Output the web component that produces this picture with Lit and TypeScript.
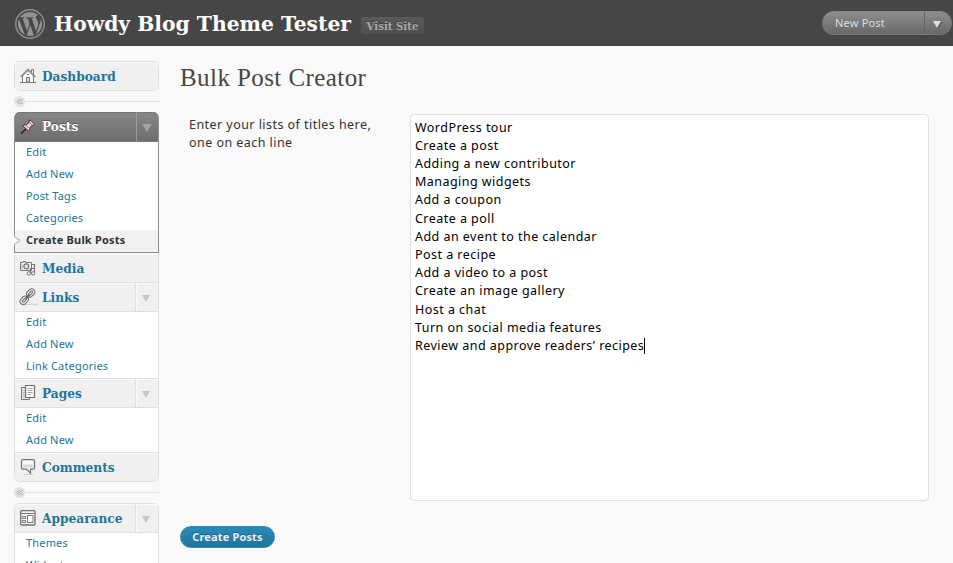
import { LitElement, html, svg, css, nothing } from "lit";
import { customElement, property } from "lit/decorators.js";
import { classMap } from "lit/directives/class-map.js";

const icons: Record<string, unknown> = {
  dashboard: svg`<path d="M8 2.500 2.500 8v6.500h11V8z" fill="#fafafa" stroke="#777"/><path d="M.5 8.800 8 1.300l7.500 7.500" fill="none" stroke="#808080" stroke-width="1.200"/><path d="M11.500 4V1.500h2V6" fill="#eee" stroke="#777"/><path d="M6.500 14v-4.500h3V14z" fill="#ddd" stroke="#777"/><path d="M7 6.500h2M0 14.500h16" fill="none" stroke="#777"/>`,
  posts: svg`<path d="M0 14.500h12" stroke="#875d5d" opacity=".6"/><path d="M7 9 1 14.500" stroke="#2b2020" stroke-width="1.600"/><path d="M10 .8 14.800 5.300 13.400 6.200 12.400 6 9.800 8.900 9.600 11.500 8.400 12 3.200 7.200 4 6 6.600 5.800 9.400 3.200 9 2z" fill="#efd2d0" stroke="#332626" stroke-width=".9"/><path d="m6.200 6.600 3.400 3M9.500 3.500l2.500 2.400" stroke="#a87c7a"/>`,
  media: svg`<path d="M.5 2.500h2.500v-1h2.500v1h6v8H.500z" fill="#f5f5f5" stroke="#777"/><circle cx="6.300" cy="6.300" r="2.500" fill="#e4e4e4" stroke="#777" stroke-width="1.200"/><path d="M2 4v5" stroke="#aaa"/><path d="M12 4.500h2.500v9M10.500 13.500V8.500h4" fill="none" stroke="#777" stroke-width="1.200"/><circle cx="8.800" cy="13.400" r="1.700" fill="#eee" stroke="#777"/><circle cx="13" cy="13.400" r="1.700" fill="#eee" stroke="#777"/>`,
  links: svg`<path d="M4 15.300h14" stroke="#ccc"/><g fill="none" stroke="#6c6c6c" stroke-width="3.200"><rect x="7.300" y="1.900" width="6.800" height="4.200" rx="2.100" transform="rotate(-45 10.700 4)"/><rect x=".8" y="9.300" width="6.800" height="4.200" rx="2.100" transform="rotate(-45 4.200 11.400)"/></g><g fill="none" stroke="#e4e4e4" stroke-width="1.300"><rect x="7.300" y="1.900" width="6.800" height="4.200" rx="2.100" transform="rotate(-45 10.700 4)"/><rect x=".8" y="9.300" width="6.800" height="4.200" rx="2.100" transform="rotate(-45 4.200 11.400)"/></g><path d="m5.500 10 4-4.200" stroke="#666" stroke-width="2"/>`,
  pages: svg`<path d="M5 2.500H1.500v12h8V12" fill="#e8e8e8" stroke="#777"/><path d="M5.500.5h9v12h-9z" fill="#f8f8f8" stroke="#6f6f6f" stroke-width="1.200"/><path d="M7.500 3.500h5M7.500 5.500h5M7.500 7.500h5M7.500 9.500h3M3 5.500h1.500M3 7.500h1.500M3 9.500h1.500M3 11.500h1.500" stroke="#aaa"/>`,
  comments: svg`<path d="M4 15.500h9" stroke="#ccc"/><path d="M3 .7h10q1.500 0 1.500 1.500v6.500q0 1.500-1.500 1.500h-2.500v4L6.500 10.200H3Q1.500 10.200 1.500 8.700V2.200Q1.500.7 3 .7z" fill="#f8f8f8" stroke="#707070" stroke-width="1.200"/><path d="M3 5.500h10v3.200H3z" fill="#d8d8d8"/>`,
  appearance: svg`<rect x=".7" y=".7" width="14.300" height="14.300" rx="1" fill="#f5f5f5" stroke="#6f6f6f" stroke-width="1.300"/><path d="M1 3.500h14" stroke="#777"/><path d="M2.500 6.500h3v2h-3zM2.500 10.500h3v2h-3zM7.500 5.500h5.500v7H7.500z" fill="#fff" stroke="#777"/>`,
};

@customElement("wp-menu")
class WpMenu extends LitElement {
  @property() icon = "";
  @property() label = "";
  @property({ attribute: false }) items: string[] = [];
  @property({ type: Boolean, reflect: true }) current = false;

  static styles = css`
    :host { display: block; border: 1px solid #dfdfdf; border-top: 0; background: #fff; }
    .head { display: flex; height: 28px; background: #f0f0f0; box-shadow: inset 0 1px #fafafa; align-items: center; border-radius: inherit; }
    .icon { width: 16px; height: 16px; margin-left: 5px; flex: none; overflow: visible; }
    .name { flex: 1; margin-left: 6px; padding-top: 1px; font: bold 12.200px/28px "DejaVu Serif", serif; color: #21759b; white-space: nowrap; }
    .toggle { width: 22px; height: 28px; border-left: 1px solid #dfdfdf; box-shadow: inset 1px 1px #fafafa; display: flex; align-items: center; padding-left: 6px; }
    .arrow { width: 0; height: 0; border: 4.500px solid transparent; border-width: 7px 4.500px 0; border-top-color: #c5c5c5; margin-top: 2px; }
    .toggle { box-sizing: border-box; width: 23px; }
    .list { border-top: 1px solid #dfdfdf; }
    .item { display: block; height: 22px; padding-left: 11px; font: 11px/20px "Noto Sans", sans-serif; letter-spacing: .17px; color: #21759b; position: relative; }
    .on { background: #f1f1f1; color: #333; font-weight: bold; letter-spacing: .2px; }
    .notch { position: absolute; left: -1px; top: 6px; width: 7px; height: 9px; }
    :host([current]) { border-color: #8e8e8e; }
    :host([current]) .head { background: linear-gradient(#888, #6d6d6d); box-shadow: inset 0 1px #777; border-radius: 5px 5px 0 0; height: 29px; }
    :host([current]) .name { color: #fff; text-shadow: 0 -1px #555; }
    :host([current]) .toggle { border-color: #9c9c9c; height: 29px; box-shadow: none; width: 22px; }
    :host([current]) .arrow { border-width: 8px 5px 0; border-top-color: #a2a2a2; margin-left: -1px; }
    :host([current]) .list { border-color: #7c7c7c; }
  `;

  render() {
    return html`
      <div class="head">
        <svg class="icon" viewBox="0 0 16 16">${icons[this.icon]}</svg>
        <span class="name">${this.label}</span>
        ${this.items.length ? html`<span class="toggle"><i class="arrow"></i></span>` : nothing}
      </div>
      ${this.items.length
        ? html`<div class="list">
            ${this.items.map((text, i) => {
              const on = this.current && i === this.items.length - 1;
              return html`<a class=${classMap({ item: true, on })}>
                ${on ? html`<svg class="notch" viewBox="0 0 7 9"><path d="M0 0l6 4.500L0 9z" fill="#f9f9f9"/><path d="M0 .5 6 4.500 0 8.500" fill="none" stroke="#aaa"/></svg>` : nothing}${text}</a>`;
            })}
          </div>`
        : nothing}
    `;
  }
}

const titles = [
  "WordPress tour", "Create a post", "Adding a new contributor", "Managing widgets", "Add a coupon",
  "Create a poll", "Add an event to the calendar", "Post a recipe", "Add a video to a post",
  "Create an image gallery", "Host a chat", "Turn on social media features",
  "Review and approve readers’ recipes",
];

@customElement("app-root")
class AppRoot extends LitElement {
  static styles = css`
    :host { display: flex; flex-direction: column; height: 563px; overflow: hidden; background: #f9f9f9; font-family: "Noto Sans", sans-serif; }
    * { box-sizing: border-box; }
    .top { height: 46px; flex: none; background: #464646; display: flex; align-items: center; padding: 0 1px 0 15px; }
    .logo { width: 30px; height: 30px; margin-top: 2px; }
    .blog { margin: 0 0 0 9px; padding-top: 1px; font: bold 20.300px/46px "DejaVu Serif", serif; color: #fff; white-space: nowrap; width: 307px; }
    .visit { height: 17px; width: 63px; margin-top: 5px; border-radius: 3px; background: linear-gradient(#5a5a5a, #505050); color: #a8a8a8; font: bold 10.200px/19px "DejaVu Serif", serif; text-align: center; text-shadow: 0 -1px #3f3f3f; white-space: nowrap; }
    .new { margin-left: auto; width: 130px; height: 24px; border-radius: 12px; background: linear-gradient(#8d8d8d, #686868); border: 1px solid #777; border-top-color: #858585; display: flex; color: #ddd; font-size: 11px; line-height: 22px; letter-spacing: .2px; }
    .newtext { flex: 1; padding-left: 12px; }
    .newtoggle { width: 27px; border-left: 1px solid #626262; padding: 9px 0 0 8px; }
    .tri { display: block; width: 0; height: 0; border: 4px solid transparent; border-top: 7px solid #ddd; border-bottom: 0; filter: drop-shadow(1px 1px #555); }
    .body { display: flex; flex: 1; min-height: 0; padding-left: 14px; }
    .side { width: 145px; padding-top: 15px; flex: none; }
    .first { border-top: 1px solid #dfdfdf; border-radius: 6px 6px 0 0; }
    .last { border-radius: 0 0 6px 6px; }
    .solo { border-top: 1px solid #dfdfdf; border-radius: 6px; }
    .posts { border-radius: 6px 6px 0 0; margin-bottom: 1px; border-top: 0; }
    .sep { display: flex; align-items: center; height: 21px; }
    .sep::after { content: ""; flex: 1; height: 1px; background: #e3e3e3; }
    .dot { width: 11px; height: 11px; }
    .main { flex: 1; padding: 15px 24px 0 21px; }
    .title { margin: 0; height: 53px; font: 25px/34px "Liberation Serif", serif; letter-spacing: .42px; color: #464646; white-space: nowrap; }
    .form { display: flex; justify-content: space-between; }
    .hint { margin: 0 0 0 9px; padding-top: 2px; width: 210px; font-size: 12.500px; line-height: 18px; letter-spacing: .45px; color: #333; }
    .area { width: 519px; height: 387px; border: 1px solid #dfdfdf; border-radius: 4px; background: #fff; padding: 3.650px 4px 0; font-size: 12.500px; line-height: 18.200px; letter-spacing: .46px; color: #000; }
    .line { white-space: nowrap; height: 18.200px; }
    .caret { display: inline-block; width: 1px; height: 16px; background: #000; vertical-align: -4px; }
    .submit { display: block; margin-top: 25px; width: 95px; height: 22px; padding: 0; border: 1px solid #298cba; border-radius: 11px; background: linear-gradient(#298bb9, #21759b); color: #eaf2fa; font: bold 11px/20px "Noto Sans", sans-serif; letter-spacing: .15px; text-shadow: 0 -1px #1b5f7e; white-space: nowrap; }
  `;

  private separator() {
    return html`<div class="sep"><svg class="dot" viewBox="0 0 11 11"><circle cx="5.500" cy="5.500" r="5.500" fill="#e3e3e3"/><path d="M5.500 3 3 5.500 5.500 8M8.500 3 6 5.500 8.500 8" fill="none" stroke="#999"/></svg></div>`;
  }

  render() {
    return html`
      <header class="top">
        <svg class="logo" viewBox="0 0 24 24"><path fill="#919191" d="M21.469 6.825c.84 1.537 1.318 3.3 1.318 5.175 0 3.979-2.156 7.456-5.363 9.325l3.295-9.527c.615-1.54.82-2.771.82-3.864 0-.405-.026-.78-.07-1.11m-7.981.105c.647-.03 1.232-.105 1.232-.105.582-.075.514-.93-.067-.899 0 0-1.755.135-2.88.135-1.064 0-2.85-.15-2.85-.15-.585-.03-.661.855-.075.885 0 0 .54.061 1.125.09l1.68 4.605-2.37 7.08L5.354 6.9c.649-.03 1.234-.1 1.234-.1.585-.075.516-.93-.065-.896 0 0-1.746.138-2.874.138-.2 0-.438-.008-.69-.015C4.911 3.15 8.235 1.215 12 1.215c2.809 0 5.365 1.072 7.286 2.833-.046-.003-.091-.009-.141-.009-1.06 0-1.812.923-1.812 1.914 0 .89.513 1.643 1.06 2.531.411.72.89 1.643.89 2.977 0 .915-.354 1.994-.821 3.479l-1.075 3.585-3.9-11.61.001.014zM12 22.784c-1.059 0-2.081-.153-3.048-.437l3.237-9.406 3.315 9.087c.024.053.05.101.078.149-1.12.393-2.325.609-3.582.609M1.211 12c0-1.564.336-3.05.935-4.39L7.290 21.709C3.694 19.960 1.212 16.271 1.211 12" transform="translate(1.300 1.300) scale(.892)"/><circle cx="12" cy="12" r="11.400" fill="none" stroke="#919191" stroke-width="1.100"/></svg>
        <h1 class="blog">Howdy Blog Theme Tester</h1>
        <a class="visit">Visit Site</a>
        <div class="new"><span class="newtext">New Post</span><span class="newtoggle"><i class="tri"></i></span></div>
      </header>
      <div class="body">
        <nav class="side">
          <wp-menu class="solo" icon="dashboard" label="Dashboard"></wp-menu>
          ${this.separator()}
          <wp-menu class="posts" current icon="posts" label="Posts" .items=${["Edit", "Add New", "Post Tags", "Categories", "Create Bulk Posts"]}></wp-menu>
          <wp-menu icon="media" label="Media"></wp-menu>
          <wp-menu icon="links" label="Links" .items=${["Edit", "Add New", "Link Categories"]}></wp-menu>
          <wp-menu icon="pages" label="Pages" .items=${["Edit", "Add New"]}></wp-menu>
          <wp-menu class="last" icon="comments" label="Comments"></wp-menu>
          ${this.separator()}
          <wp-menu class="first" icon="appearance" label="Appearance" .items=${["Themes", "Widgets"]}></wp-menu>
        </nav>
        <main class="main">
          <h2 class="title">Bulk Post Creator</h2>
          <div class="form">
            <p class="hint">Enter your lists of titles here,<br>one on each line</p>
            <div class="area">${titles.map((t, i) => html`<div class="line">${t}${i === titles.length - 1 ? html`<i class="caret"></i>` : nothing}</div>`)}</div>
          </div>
          <button class="submit">Create Posts</button>
        </main>
      </div>
    `;
  }
}
